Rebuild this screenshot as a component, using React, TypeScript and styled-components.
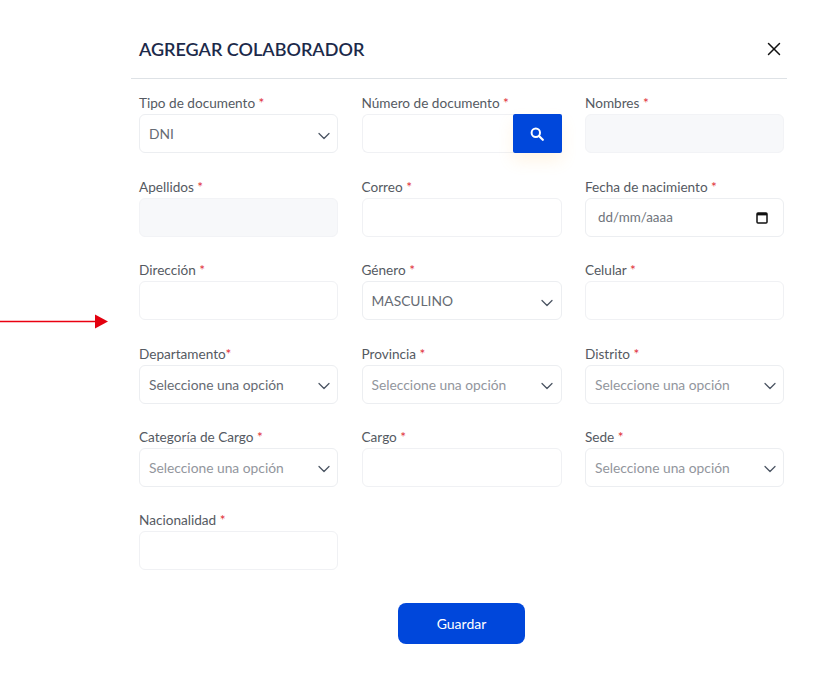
import React from "react";
import styled, { createGlobalStyle } from "styled-components";
import { ChevronDown, X } from "lucide-react";

const GlobalStyle = createGlobalStyle`
  html, body {
    margin: 0;
    padding: 0;
    background: #fff;
    font-family: "Lato", "Noto Sans", sans-serif;
  }
`;

type FieldDef = {
  label: string;
  tight?: boolean;
  kind: "input" | "disabled" | "select" | "search" | "date";
  value?: string;
  muted?: boolean;
};

const fields: FieldDef[] = [
  { label: "Tipo de documento", kind: "select", value: "DNI" },
  { label: "Número de documento", kind: "search" },
  { label: "Nombres", kind: "disabled" },
  { label: "Apellidos", kind: "disabled" },
  { label: "Correo", kind: "input" },
  { label: "Fecha de nacimiento", kind: "date", value: "dd/mm/aaaa" },
  { label: "Dirección", kind: "input" },
  { label: "Género", kind: "select", value: "MASCULINO" },
  { label: "Celular", kind: "input" },
  { label: "Departamento", tight: true, kind: "select", value: "Seleccione una opción" },
  { label: "Provincia", kind: "select", value: "Seleccione una opción", muted: true },
  { label: "Distrito", kind: "select", value: "Seleccione una opción", muted: true },
  { label: "Categoría de Cargo", kind: "select", value: "Seleccione una opción", muted: true },
  { label: "Cargo", kind: "input" },
  { label: "Sede", kind: "select", value: "Seleccione una opción", muted: true },
  { label: "Nacionalidad", kind: "input" },
];

const Control = ({ field }: { field: FieldDef }) => {
  switch (field.kind) {
    case "select":
      return (
        <SelectBox>
          <SelectText $muted={field.muted}>{field.value}</SelectText>
          <Chevron size={20} strokeWidth={1.5} color="#4b5563" />
        </SelectBox>
      );
    case "search":
      return (
        <SearchRow>
          <SearchInput />
          <SearchButton aria-label="Buscar">
            <svg width="14" height="14" viewBox="0 0 14 14" fill="none">
              <circle cx="5.8" cy="5.8" r="4.2" stroke="#fff" strokeWidth="2" />
              <path d="M9 9l3.8 3.8" stroke="#fff" strokeWidth="2.2" strokeLinecap="round" />
            </svg>
          </SearchButton>
        </SearchRow>
      );
    case "date":
      return (
        <DateBox>
          <DateText>{field.value}</DateText>
          <svg width="12" height="13" viewBox="0 0 12 13" fill="none">
            <rect x="1" y="2" width="10" height="10" rx="1" stroke="#111" strokeWidth="1.5" />
            <path d="M1 3.2h10" stroke="#111" strokeWidth="2.4" />
          </svg>
        </DateBox>
      );
    case "disabled":
      return <TextInput disabled $filled />;
    default:
      return <TextInput />;
  }
};

export default function App() {
  return (
    <>
      <GlobalStyle />
      <Page>
        <Arrow width="109" height="16" viewBox="0 0 109 16">
          <path d="M0 8.5h96" stroke="#ea0010" strokeWidth="1.3" />
          <path d="M95 1.5l13 7-13 7z" fill="#e3000f" />
        </Arrow>
        <Modal>
          <Header>
            <Title>AGREGAR COLABORADOR</Title>
            <CloseButton aria-label="Cerrar">
              <X size={22} strokeWidth={1.6} color="#111" />
            </CloseButton>
          </Header>
          <Body>
            <FormGrid>
              {fields.map((field) => (
                <Field key={field.label}>
                  <Label>
                    {field.label}
                    {field.tight ? "" : " "}
                    <Required>*</Required>
                  </Label>
                  <Control field={field} />
                </Field>
              ))}
            </FormGrid>
            <Actions>
              <SaveButton>Guardar</SaveButton>
            </Actions>
          </Body>
        </Modal>
      </Page>
    </>
  );
}

const Page = styled.div`
  position: relative;
  width: 822px;
  height: 684px;
  padding-left: 131px;
  box-sizing: border-box;
  overflow: hidden;
`;

const Arrow = styled.svg`
  position: absolute;
  left: 0;
  top: 313px;
`;

const Modal = styled.div`
  width: 656px;
  display: flex;
  flex-direction: column;
`;

const Header = styled.div`
  padding: 20px 2.5px 0 8px;
  height: 58px;
  border-bottom: 1px solid #dee2e6;
  display: flex;
  align-items: center;
  justify-content: space-between;
`;

const Title = styled.h2`
  margin: 0;
  font-size: 18px;
  font-weight: 600;
  color: #1c2a4a;
`;

const CloseButton = styled.button`
  width: 22px;
  height: 22px;
  padding: 0;
  border: 0;
  background: none;
  display: flex;
  align-items: center;
  justify-content: center;
`;

const Body = styled.div`
  padding: 15.4px 3px 0 8px;
`;

const FormGrid = styled.div`
  display: grid;
  grid-template-columns: 199px 200px 199px;
  column-gap: 23.5px;
  row-gap: 24.4px;
`;

const Field = styled.div`
  display: flex;
  flex-direction: column;
`;

const Label = styled.label`
  height: 20px;
  line-height: 19.6px;
  font-size: 13.6px;
  color: #555a62;
  white-space: nowrap;
`;

const Required = styled.span`
  color: #e02b35;
`;

const TextInput = styled.input<{ $filled?: boolean }>`
  height: 39px;
  box-sizing: border-box;
  width: 100%;
  border: 1px solid ${(p) => (p.$filled ? "#f2f3f6" : "#f0f1f4")};
  border-radius: 6px;
  background: ${(p) => (p.$filled ? "#f7f8fa" : "#fff")};
  outline: none;
`;

const SelectBox = styled.div`
  height: 39px;
  box-sizing: border-box;
  border: 1px solid #eceef1;
  border-radius: 6px;
  padding: 0 3.5px 0 9px;
  display: flex;
  align-items: center;
  justify-content: space-between;
  background: #fff;
`;

const DateBox = styled(SelectBox)`
  padding: 0 15px 0 12px;
`;

const Chevron = styled(ChevronDown)`
  margin-top: 4px;
`;

const SelectText = styled.span<{ $muted?: boolean }>`
  font-size: 13.8px;
  color: ${(p) => (p.$muted ? "#92969d" : "#666b73")};
`;

const DateText = styled.span`
  font-size: 13.4px;
  color: #6f747c;
`;

const SearchRow = styled.div`
  display: flex;
  height: 39px;
`;

const SearchInput = styled(TextInput)`
  flex: 1;
  min-width: 0;
  border-right: 0;
  border-radius: 6px 0 0 6px;
`;

const SearchButton = styled.button`
  width: 49px;
  flex: none;
  border: 0;
  padding: 0;
  border-radius: 2px;
  background: #0047db;
  box-shadow: 0 8px 16px rgba(255, 184, 77, 0.14);
  display: flex;
  align-items: center;
  justify-content: center;
`;

const Actions = styled.div`
  display: flex;
  justify-content: center;
  margin-top: 32.6px;
  width: 645px;
`;

const SaveButton = styled.button`
  width: 127px;
  height: 41px;
  border: 0;
  border-radius: 8px;
  background: #0047db;
  color: #fff;
  font-family: inherit;
  font-size: 14px;
  font-weight: 400;
`;
